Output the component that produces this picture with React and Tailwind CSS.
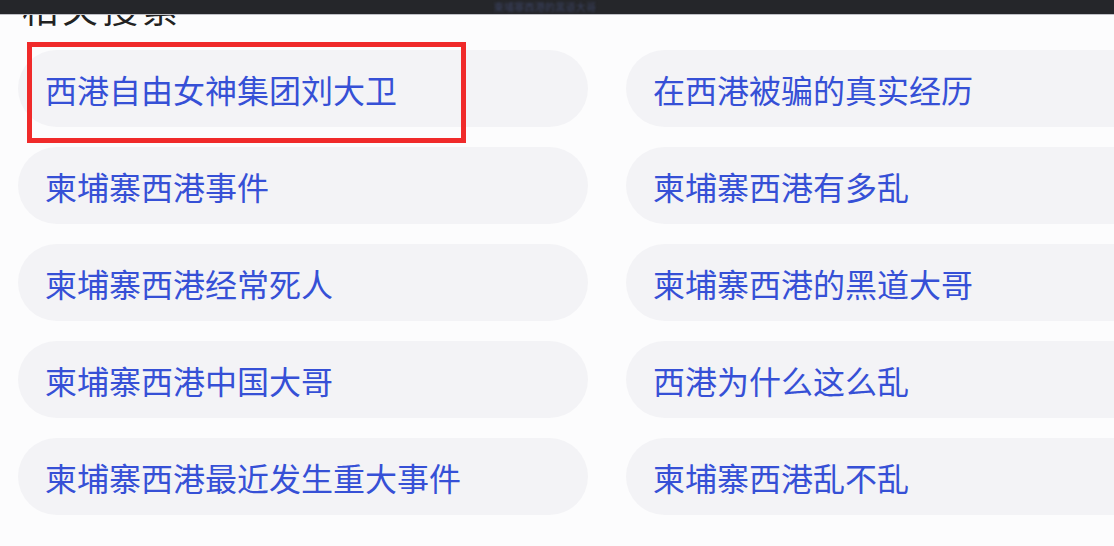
import React from "react";

const rows = [
  ["西港自由女神集团刘大卫", "在西港被骗的真实经历"],
  ["柬埔寨西港事件", "柬埔寨西港有多乱"],
  ["柬埔寨西港经常死人", "柬埔寨西港的黑道大哥"],
  ["柬埔寨西港中国大哥", "西港为什么这么乱"],
  ["柬埔寨西港最近发生重大事件", "柬埔寨西港乱不乱"],
];

const Pill = ({ text }) => (
  <div className="h-[77px] rounded-full bg-[#f3f3f6] flex items-center pl-[27px]">
    <span className="text-[32px] leading-none text-[#3650d6] whitespace-nowrap">{text}</span>
  </div>
);

const App = () => {
  return (
    <div
      className="w-[1114px] h-[546px] overflow-hidden bg-[#fcfcfd] flex flex-col"
      style={{ fontFamily: '"Noto Sans CJK SC", "Noto Sans", sans-serif' }}
    >
      {/* top bar */}
      <div className="h-[15px] shrink-0 bg-[#25262a] border-b border-[#bfc0c6] flex justify-center items-center z-10">
        <span className="text-[10px] leading-[12px] text-[#3b4260] blur-[1px] ml-[-24px] tracking-wide">
          柬埔寨西港的黑道大哥
        </span>
      </div>

      <div className="relative flex-1 overflow-hidden">
        <h2 className="mt-[-26px] ml-[22px] text-[36px] leading-none text-[#222] tracking-[4px]">相关搜索</h2>

        <div className="mt-[25px] ml-[18px] grid grid-cols-[570px_570px] gap-x-[38px] gap-y-[20px]">
          {rows.map(([a, b]) => (
            <React.Fragment key={a}>
              <Pill text={a} />
              <Pill text={b} />
            </React.Fragment>
          ))}
        </div>

        {/* annotation box */}
        <div className="absolute left-[27px] top-[27px] w-[439px] h-[101px] border-[5px] border-[#f02a2a]" />
      </div>
    </div>
  );
};

export default App;
